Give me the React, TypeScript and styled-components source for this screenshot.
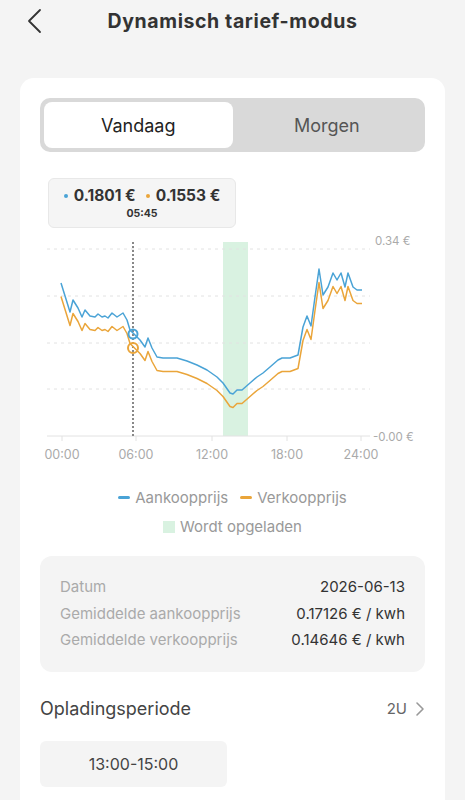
import styled, { createGlobalStyle } from 'styled-components';
import { useState } from 'react';

const GlobalStyle = createGlobalStyle`
  body {
    margin: 0;
    background: #f4f4f4;
    font-family: Inter, "Noto Sans", sans-serif;
    color: #333;
  }
`;

const BLUE = '#4aa3d6';
const ORANGE = '#eaa53a';

// page coordinates of the buy price line, traced from the day curve
const buyPoints: [number, number][] = [
  [61, 283], [70, 312], [73, 300], [78, 308], [82, 317], [85, 310], [90, 316], [95, 317],
  [98, 314], [102, 317], [105, 316], [108, 318], [112, 313], [117, 317], [123, 313],
  [127, 320], [130, 330], [135, 335], [140, 340], [145, 347], [148, 338], [152, 348],
  [157, 357], [163, 358], [177, 358], [187, 361], [197, 365], [207, 370], [217, 377],
  [223, 383], [230, 393], [233, 394], [237, 390], [242, 390], [250, 383], [257, 377],
  [263, 373], [270, 367], [278, 360], [282, 358], [290, 358], [298, 355], [303, 327],
  [307, 316], [311, 326], [315, 297], [319, 269], [323, 295], [328, 287], [333, 273],
  [337, 280], [341, 273], [345, 287], [348, 273], [353, 287], [357, 290], [362, 290],
];

const toPath = (pts: [number, number][], dy = 0) =>
  pts.map(([x, y], i) => `${i ? 'L' : 'M'}${x} ${y + dy}`).join(' ');

const gridY = [249, 296, 343, 389];
const ticks = [
  { x: 62, label: '00:00' },
  { x: 136, label: '06:00' },
  { x: 212, label: '12:00' },
  { x: 287, label: '18:00' },
  { x: 361, label: '24:00' },
];

function PriceChart() {
  return (
    <ChartSvg width={385} height={240} viewBox="40 230 385 240">
      <rect x={223} y={242} width={25} height={194} fill="#d9f2e1" />
      {gridY.map((y) => (
        <line key={y} x1={47} x2={370} y1={y} y2={y} stroke="#e2e2e2" strokeDasharray="3 4" />
      ))}
      <line x1={47} x2={370} y1={436} y2={436} stroke="#e2e2e2" />
      {ticks.map((t) => (
        <g key={t.label}>
          <line x1={t.x} x2={t.x} y1={436} y2={441} stroke="#e2e2e2" />
          <text x={t.x} y={459} textAnchor="middle" fontSize={12.5} fill="#aaa">
            {t.label}
          </text>
        </g>
      ))}
      <text x={375} y={245} fontSize={11.5} fill="#aaa">0.34 €</text>
      <text x={373} y={441} fontSize={11.5} fill="#aaa">-0.00 €</text>
      <line x1={133} x2={133} y1={242} y2={436} stroke="#888" strokeWidth={2} strokeDasharray="2 2" />
      <path d={toPath(buyPoints, 13.5)} fill="none" stroke={ORANGE} strokeWidth={1.5} strokeLinejoin="round" />
      <path d={toPath(buyPoints)} fill="none" stroke={BLUE} strokeWidth={1.5} strokeLinejoin="round" />
      <circle cx={133} cy={334} r={4.5} fill="none" stroke={BLUE} strokeWidth={2} />
      <circle cx={133} cy={348} r={5} fill="none" stroke={ORANGE} strokeWidth={2} />
    </ChartSvg>
  );
}

export default function App() {
  const [tab, setTab] = useState<'today' | 'tomorrow'>('today');
  return (
    <>
      <GlobalStyle />
      <Page>
        <Header>
          <BackButton aria-label="Terug">
            <svg width="16" height="26" viewBox="0 0 16 26">
              <path d="M14 2 L3 13 L14 24" fill="none" stroke="#333" strokeWidth="1.8" strokeLinecap="round" strokeLinejoin="round" />
            </svg>
          </BackButton>
          <Title>Dynamisch tarief-modus</Title>
        </Header>
        <Card>
          <Segmented>
            <SegButton $active={tab === 'today'} onClick={() => setTab('today')}>Vandaag</SegButton>
            <SegButton $active={tab === 'tomorrow'} onClick={() => setTab('tomorrow')}>Morgen</SegButton>
          </Segmented>

          <Tooltip>
            <PriceRow>
              <Dot $color={BLUE} />0.1801 €
              <Dot $color={ORANGE} $gap />0.1553 €
            </PriceRow>
            <TimeLabel>05:45</TimeLabel>
          </Tooltip>

          <PriceChart />

          <Legend>
            <LegendLine>
              <LegendItem><Dash $color={BLUE} />Aankoopprijs</LegendItem>
              <LegendItem><Dash $color={ORANGE} />Verkoopprijs</LegendItem>
            </LegendLine>
            <LegendLine>
              <LegendItem><Swatch />Wordt opgeladen</LegendItem>
            </LegendLine>
          </Legend>

          <InfoBox>
            <InfoRow><InfoLabel>Datum</InfoLabel><InfoValue>2026-06-13</InfoValue></InfoRow>
            <InfoRow><InfoLabel>Gemiddelde aankoopprijs</InfoLabel><InfoValue>0.17126 € / kwh</InfoValue></InfoRow>
            <InfoRow><InfoLabel>Gemiddelde verkoopprijs</InfoLabel><InfoValue>0.14646 € / kwh</InfoValue></InfoRow>
          </InfoBox>

          <SectionRow>
            <SectionTitle>Opladingsperiode</SectionTitle>
            <SectionAction>
              2U
              <svg width="10" height="16" viewBox="0 0 10 16">
                <path d="M2 2 L8 8 L2 14" fill="none" stroke="#999" strokeWidth="1.6" strokeLinecap="round" strokeLinejoin="round" />
              </svg>
            </SectionAction>
          </SectionRow>

          <Chip>13:00-15:00</Chip>
        </Card>
      </Page>
    </>
  );
}

const Page = styled.div`
  width: 465px;
  min-height: 800px;
  overflow: hidden;
`;

const Header = styled.header`
  position: relative;
  height: 42px;
  display: flex;
  align-items: center;
  justify-content: center;
  margin-bottom: 36px;
`;

const BackButton = styled.button`
  position: absolute;
  left: 26px;
  top: 8px;
  background: none;
  border: none;
  padding: 0;
  display: flex;
`;

const Title = styled.h1`
  margin: 0;
  font-size: 19.5px;
  font-weight: 700;
  color: #333;
  letter-spacing: 0.6px;
`;

const Card = styled.main`
  margin: 0 20px;
  background: #fff;
  border-radius: 14px;
  padding: 20px 20px 40px;
  min-height: 760px;
  box-sizing: border-box;
`;

const Segmented = styled.div`
  display: flex;
  background: #d9d9d9;
  border-radius: 10px;
  padding: 4px;
  height: 54px;
  box-sizing: border-box;
`;

const SegButton = styled.button<{ $active?: boolean }>`
  flex: 1;
  border: none;
  border-radius: 8px;
  background: ${(p) => (p.$active ? '#fff' : 'transparent')};
  color: ${(p) => (p.$active ? '#222' : '#555')};
  font-family: inherit;
  font-size: 18px;
  cursor: pointer;
`;

const Tooltip = styled.div`
  margin: 26px 0 0 8px;
  width: 188px;
  height: 50px;
  box-sizing: border-box;
  border: 1px solid #e8e8e8;
  background: #f5f5f5;
  border-radius: 6px;
  display: flex;
  flex-direction: column;
  align-items: center;
  justify-content: center;
  gap: 2px;
`;

const PriceRow = styled.div`
  display: flex;
  align-items: center;
  font-size: 15.5px;
  font-weight: 700;
  color: #333;
`;

const Dot = styled.span<{ $color: string; $gap?: boolean }>`
  width: 4px;
  height: 4px;
  border-radius: 50%;
  background: ${(p) => p.$color};
  margin: 0 6px 0 ${(p) => (p.$gap ? '10px' : '0')};
`;

const TimeLabel = styled.div`
  font-size: 10.5px;
  font-weight: 700;
  color: #333;
`;

const ChartSvg = styled.svg`
  display: block;
  margin-top: 2px;
  font-family: Inter, "Noto Sans", sans-serif;
`;

const Legend = styled.div`
  display: flex;
  flex-direction: column;
  align-items: center;
  gap: 10px;
  margin-top: 18px;
`;

const LegendLine = styled.div`
  display: flex;
  gap: 12px;
`;

const LegendItem = styled.div`
  display: flex;
  align-items: center;
  gap: 5px;
  font-size: 15px;
  color: #999;
`;

const Dash = styled.span<{ $color: string }>`
  width: 12px;
  height: 3px;
  border-radius: 2px;
  background: ${(p) => p.$color};
`;

const Swatch = styled.span`
  width: 12px;
  height: 12px;
  background: #d9f2e1;
`;

const InfoBox = styled.section`
  margin-top: 20px;
  background: #f4f4f4;
  border-radius: 12px;
  padding: 21px 20px 22px;
  display: flex;
  flex-direction: column;
  gap: 6.5px;
`;

const InfoRow = styled.div`
  display: flex;
  justify-content: space-between;
  font-size: 15px;
  line-height: 20px;
`;

const InfoLabel = styled.span`
  color: #aaa;
`;

const InfoValue = styled.span`
  color: #333;
`;

const SectionRow = styled.div`
  display: flex;
  justify-content: space-between;
  align-items: center;
  margin-top: 26px;
`;

const SectionTitle = styled.h2`
  margin: 0;
  font-size: 18px;
  font-weight: 400;
  color: #444;
`;

const SectionAction = styled.div`
  display: flex;
  align-items: center;
  gap: 8px;
  font-size: 15px;
  color: #666;
`;

const Chip = styled.div`
  margin-top: 22px;
  width: 187px;
  height: 46px;
  background: #f4f4f4;
  border-radius: 6px;
  display: flex;
  align-items: center;
  justify-content: center;
  font-size: 16px;
  color: #444;
`;
